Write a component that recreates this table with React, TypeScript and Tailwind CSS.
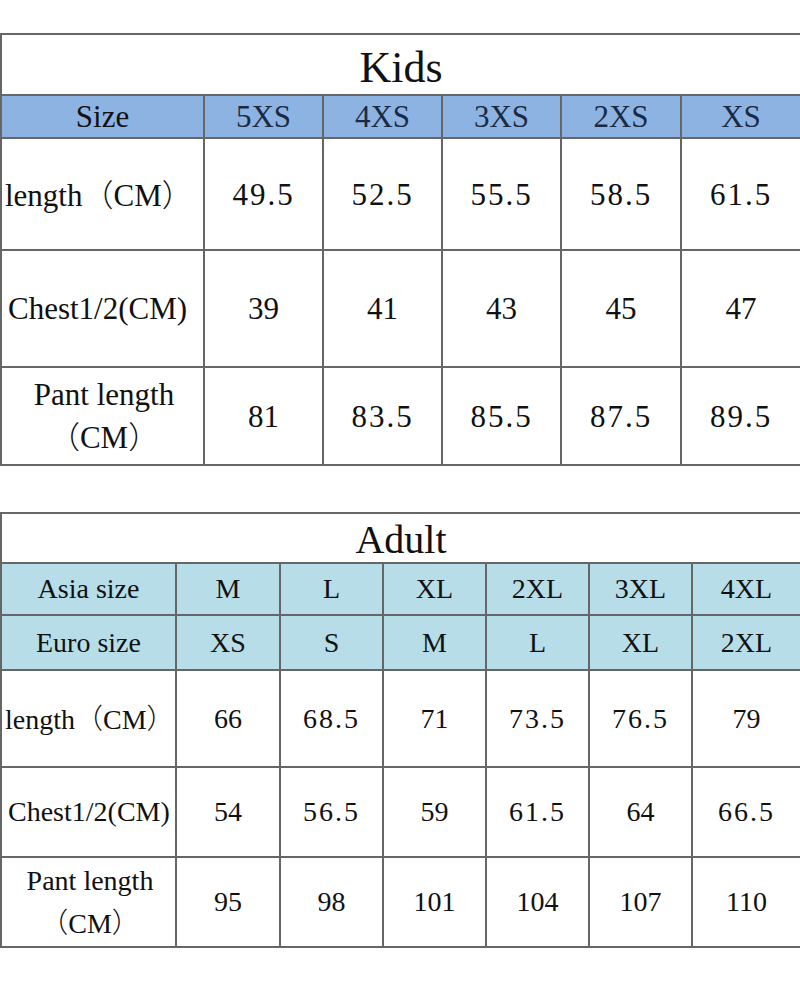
const kidsCols = ['5XS', '4XS', '3XS', '2XS', 'XS']
const kidsRows = [
  { label: 'length', h: 'h-[112px]', vals: ['49.5', '52.5', '55.5', '58.5', '61.5'] },
  { label: 'Chest1/2(CM)', h: 'h-[117px]', vals: ['39', '41', '43', '45', '47'] },
  { label: 'pant', h: 'h-[98px]', vals: ['81', '83.5', '85.5', '87.5', '89.5'] },
]

const adultAsia = ['M', 'L', 'XL', '2XL', '3XL', '4XL']
const adultEuro = ['XS', 'S', 'M', 'L', 'XL', '2XL']
const adultRows = [
  { label: 'length', h: 'h-[97px]', vals: ['66', '68.5', '71', '73.5', '76.5', '79'] },
  { label: 'Chest1/2(CM)', h: 'h-[90px]', vals: ['54', '56.5', '59', '61.5', '64', '66.5'] },
  { label: 'pant', h: 'h-[90px]', vals: ['95', '98', '101', '104', '107', '110'] },
]

const cell = 'border-2 border-[#666] text-center align-middle p-0 leading-none'

// fullwidth brackets come from the CJK font
const Cm = () => (
  <>
    <span className="font-['Noto_Sans_CJK_SC',sans-serif] font-light">（</span>CM
    <span className="font-['Noto_Sans_CJK_SC',sans-serif] font-light">）</span>
  </>
)

const Val = ({ v }: { v: string }) => (
  <span className={v.includes('.') ? 'tracking-[2px]' : ''}>{v}</span>
)

const Label = ({ label }: { label: string }) => {
  if (label === 'pant')
    return (
      <div className="leading-[40px] text-center">
        <div>Pant length</div>
        <div><Cm /></div>
      </div>
    )
  if (label === 'length')
    return (
      <span className="whitespace-nowrap">
        length<Cm />
      </span>
    )
  return <span className="whitespace-nowrap pl-[3px]">{label}</span>
}

export default function App() {
  return (
    <div className="w-[800px] h-[1000px] bg-white text-[#111] pt-[33px] font-['Liberation_Serif',serif]">
      <table className="w-[800px] table-fixed border-collapse text-[31px]">
        <colgroup>
          <col className="w-[203px]" />
          <col className="w-[119px]" />
          <col className="w-[119px]" />
          <col className="w-[119px]" />
          <col className="w-[120px]" />
          <col className="w-[120px]" />
        </colgroup>
        <tbody>
          <tr className="h-[61px]">
            <td colSpan={6} className={`${cell} text-[44px] pt-[6px]`}>Kids</td>
          </tr>
          <tr className="h-[43px] bg-[#8db3e2]">
            <td className={cell}>Size</td>
            {kidsCols.map((c) => (
              <td key={c} className={`${cell} text-[#1a2a44]`}>{c}</td>
            ))}
          </tr>
          {kidsRows.map((r) => (
            <tr key={r.label} className={r.h}>
              <td className={`${cell} text-left pl-[3px]`}>
                <Label label={r.label} />
              </td>
              {r.vals.map((v, i) => (
                <td key={i} className={cell}><Val v={v} /></td>
              ))}
            </tr>
          ))}
        </tbody>
      </table>

      <table className="w-[800px] table-fixed border-collapse text-[28px] mt-[46px]">
        <colgroup>
          <col className="w-[175px]" />
          <col className="w-[104px]" />
          <col className="w-[103px]" />
          <col className="w-[103px]" />
          <col className="w-[103px]" />
          <col className="w-[103px]" />
          <col className="w-[109px]" />
        </colgroup>
        <tbody>
          <tr className="h-[50px]">
            <td colSpan={7} className={`${cell} text-[40px] pt-[4px]`}>Adult</td>
          </tr>
          <tr className="h-[52px] bg-[#b7dde8]">
            <td className={cell}>Asia size</td>
            {adultAsia.map((c) => (
              <td key={c} className={cell}>{c}</td>
            ))}
          </tr>
          <tr className="h-[55px] bg-[#b7dde8]">
            <td className={cell}>Euro size</td>
            {adultEuro.map((c) => (
              <td key={c} className={cell}>{c}</td>
            ))}
          </tr>
          {adultRows.map((r) => (
            <tr key={r.label} className={r.h}>
              <td className={`${cell} text-left pl-[3px]`}>
                <Label label={r.label} />
              </td>
              {r.vals.map((v, i) => (
                <td key={i} className={cell}><Val v={v} /></td>
              ))}
            </tr>
          ))}
        </tbody>
      </table>
    </div>
  )
}
